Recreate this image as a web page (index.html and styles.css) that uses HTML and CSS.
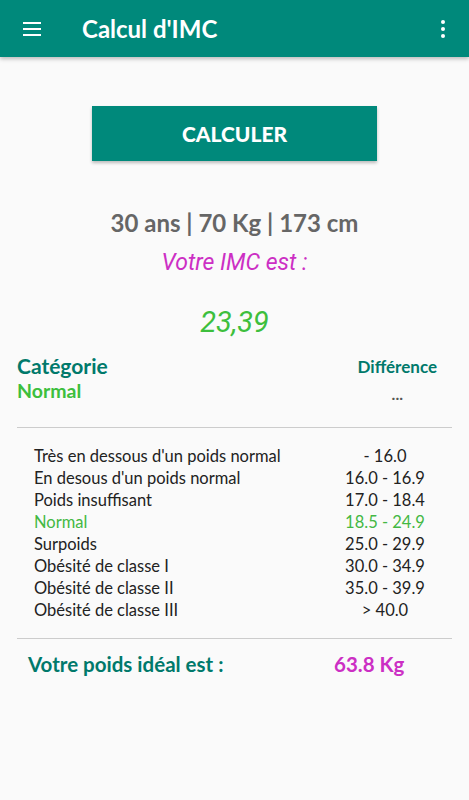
FILE: index.html
```html
<!DOCTYPE html>
<html lang="fr">
<head>
    <meta charset="UTF-8">
    <meta name="viewport" content="width=device-width, initial-scale=1.0">
    <title>Calcul d'IMC</title>
    <link rel="stylesheet" href="styles.css">
</head>
<body>
    <header class="toolbar">
        <svg class="menu-icon" width="24" height="24" viewBox="0 0 24 24">
            <path d="M3 6h18M3 12h18M3 18h18" stroke="#fff" stroke-width="2" fill="none"/>
        </svg>
        <h1 class="title">Calcul d'IMC</h1>
        <svg class="more-icon" width="24" height="24" viewBox="0 0 24 24">
            <circle cx="12" cy="5" r="2" fill="#fff"/>
            <circle cx="12" cy="12" r="2" fill="#fff"/>
            <circle cx="12" cy="19" r="2" fill="#fff"/>
        </svg>
    </header>

    <main class="content">
        <button class="calc-btn">CALCULER</button>

        <div class="profile">30 ans | 70 Kg | 173 cm</div>
        <div class="imc-label">Votre IMC est :</div>
        <div class="imc-value">23,39</div>

        <div class="summary">
            <div class="summary-col">
                <div class="summary-head">Catégorie</div>
                <div class="summary-cat">Normal</div>
            </div>
            <div class="summary-col right">
                <div class="summary-head small">Différence</div>
                <div class="summary-diff">...</div>
            </div>
        </div>

        <hr class="divider top">

        <!-- Table of categories -->
        <div class="table">
            <div class="row"><span>Très en dessous d'un poids normal</span><span class="range">- 16.0</span></div>
            <div class="row"><span>En desous d'un poids normal</span><span class="range">16.0 - 16.9</span></div>
            <div class="row"><span>Poids insuffisant</span><span class="range">17.0 - 18.4</span></div>
            <div class="row current"><span>Normal</span><span class="range">18.5 - 24.9</span></div>
            <div class="row"><span>Surpoids</span><span class="range">25.0 - 29.9</span></div>
            <div class="row"><span>Obésité de classe I</span><span class="range">30.0 - 34.9</span></div>
            <div class="row"><span>Obésité de classe II</span><span class="range">35.0 - 39.9</span></div>
            <div class="row"><span>Obésité de classe III</span><span class="range">&gt; 40.0</span></div>
        </div>

        <hr class="divider bottom">

        <div class="ideal">
            <span class="ideal-label">Votre poids idéal est :</span>
            <span class="ideal-value">63.8 Kg</span>
        </div>
    </main>
</body>
</html>
```

FILE: styles.css
```css
body {
    margin: 0;
    background: #fafafa;
    font-family: 'Lato', 'Open Sans', sans-serif;
    color: #222;
}

.toolbar {
    height: 57px;
    background: #00897b;
    display: flex;
    align-items: center;
    padding: 0 14px 0 20px;
    box-shadow: 0 2px 4px rgba(0, 0, 0, 0.25);
}

.menu-icon {
    flex: none;
}

.title {
    flex: 1;
    margin: 0 0 0 38px;
    font-size: 24px;
    font-weight: bold;
    color: #fff;
}

.content {
    display: flex;
    flex-direction: column;
    align-items: center;
    padding: 49px 17px 0;
}

.calc-btn {
    width: 285px;
    height: 55px;
    border: none;
    background: #00897b;
    color: #fff;
    font-family: inherit;
    font-size: 21px;
    font-weight: 900;
    box-shadow: 0 2px 3px rgba(0, 0, 0, 0.25);
}

.profile {
    margin-top: 47px;
    font-size: 24px;
    font-weight: bold;
    color: #666;
}

.imc-label {
    margin-top: 12px;
    font-family: 'Roboto', sans-serif;
    font-style: italic;
    font-size: 23px;
    color: #cc2fc4;
}

.imc-value {
    margin-top: 29px;
    font-family: 'Roboto', sans-serif;
    font-style: italic;
    font-size: 29px;
    color: #3dbf3d;
}

.summary {
    align-self: stretch;
    display: flex;
    justify-content: space-between;
    margin-top: 14px;
}

.summary-col.right {
    text-align: center;
    padding-right: 15px;
}

.summary-head {
    font-size: 21px;
    line-height: 25px;
    font-weight: bold;
    color: #00796b;
}

.summary-head.small {
    font-size: 17px;
    padding-top: 2px;
    line-height: 23px;
}

.summary-cat {
    font-size: 19.5px;
    line-height: 25px;
    font-weight: bold;
    color: #3dbf3d;
}

.summary-diff {
    font-size: 16px;
    font-weight: bold;
    line-height: 25px;
    padding-top: 3px;
    color: #555;
}

.divider {
    align-self: stretch;
    width: 100%;
    border: none;
    border-top: 1px solid #ccc;
    margin: 0;
}

.divider.top {
    margin-top: 21px;
}

.divider.bottom {
    margin-top: 17px;
}

.table {
    align-self: stretch;
    padding: 17px 0 0 17px;
}

.row {
    display: flex;
    justify-content: space-between;
    font-size: 16.5px;
    line-height: 22px;
}

.row .range {
    width: 110px;
    margin-right: 12px;
    text-align: center;
}

.row.current {
    color: #43b843;
}

.ideal {
    align-self: stretch;
    display: flex;
    padding: 13px 0 0 11px;
    font-size: 20.5px;
    font-weight: bold;
}

.ideal-label {
    color: #00796b;
    width: 306px;
}

.ideal-value {
    color: #cc2fc4;
}
```
